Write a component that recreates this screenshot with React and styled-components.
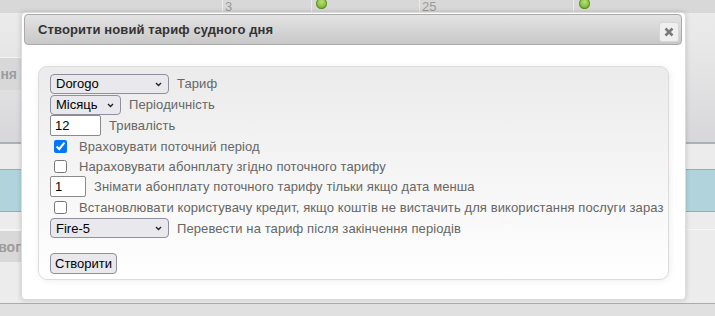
import React from "react";
import styled, { createGlobalStyle } from "styled-components";

const Global = createGlobalStyle`
  html, body { margin: 0; padding: 0; }
  body {
    font-family: "Liberation Sans", Arial, sans-serif;
    background: #e0e0e0;
  }
  * { box-sizing: border-box; }
`;

const Page = styled.div`
  position: relative;
  width: 715px;
  height: 316px;
  overflow: hidden;
  display: flex;
  flex-direction: column;
  background: #e0e0e0;
`;

/* ---------- background page ---------- */
const TopRow = styled.div`
  display: flex;
  height: 13px;
  background: #d8d8d8;
  overflow: hidden;
  flex: none;
`;

const Cell = styled.div`
  width: ${(p) => p.$w}px;
  flex: none;
  height: 13px;
  padding-left: ${(p) => p.$pad || 2}px;
  border-left: ${(p) => (p.$first ? "none" : "1px solid #ececec")};
  font-size: 13px;
  line-height: 13px;
  color: #9a9a9a;
  display: flex;
  align-items: flex-start;
`;

const Dot = styled.span`
  width: 11px;
  height: 11px;
  border-radius: 50%;
  margin-top: -2px;
  background: radial-gradient(circle at 50% 35%, #b8e07a 0%, #86bf3e 55%, #5a8f22 100%);
  box-shadow: inset 0 0 0 1px rgba(70, 110, 20, 0.5);
`;

const Toolbar = styled.div`
  height: 131px;
  flex: none;
  background: linear-gradient(#ebebeb 0%, #e6e6e6 35%, #d7d7db 100%);
  border-bottom: 2px solid #a9b1b9;
  padding-top: 44px;
`;

const SideTab = styled.div`
  width: 21px;
  height: ${(p) => p.$h}px;
  background: #d8d8d8;
  border-top: 1px solid #f2f2f2;
  display: flex;
  justify-content: flex-end;
  align-items: center;
  padding-right: ${(p) => p.$pr || 0}px;
  font-size: 14px;
  font-weight: bold;
  color: #9c9c9c;
  white-space: nowrap;
`;

const Band = styled.div`
  height: ${(p) => p.$h}px;
  flex: none;
  background: ${(p) => p.$bg || "#ececec"};
  border-top: ${(p) => p.$bt || "none"};
  border-bottom: ${(p) => p.$bb || "none"};
`;

const Footer = styled.div`
  flex: 1;
  background: #e0e0e0;
`;

/* ---------- dialog ---------- */
const Dialog = styled.div`
  position: absolute;
  left: 21px;
  top: 12px;
  width: 665px;
  height: 288px;
  background: #fff;
  border: 1px solid #dcdcdc;
  border-radius: 4px;
  box-shadow: 0 0 5px rgba(0, 0, 0, 0.18);
  padding: 1px 3px 0 2px;
  display: flex;
  flex-direction: column;
`;

const TitleBar = styled.div`
  height: 31px;
  flex: none;
  border: 1px solid #aaaaaa;
  border-radius: 4px;
  background: linear-gradient(#e3e3e3, #c8c8c8);
  display: flex;
  align-items: center;
  justify-content: space-between;
  padding: 0 2px 0 13px;
`;

const Title = styled.span`
  font-size: 13px;
  font-weight: bold;
  color: #333;
  letter-spacing: 0.1px;
  margin-top: -1px;
`;

const CloseBtn = styled.button`
  width: 20px;
  height: 20px;
  margin-top: 4px;
  padding: 0;
  border: 1px solid #d6d6d6;
  border-radius: 3px;
  background: #efefef;
  display: flex;
  align-items: center;
  justify-content: center;
  cursor: pointer;
`;

const Panel = styled.div`
  margin: 21px 13px 0 14px;
  height: 214px;
  border: 1px solid #dcdcdc;
  border-radius: 9px;
  background: linear-gradient(#ebebeb, #ffffff);
  box-shadow: 1px 1px 6px rgba(0, 0, 0, 0.07);
  padding: 6px 11px 5px 11px;
  display: flex;
  flex-direction: column;
`;

const Row = styled.div`
  height: ${(p) => p.$h || 21}px;
  display: flex;
  align-items: center;
  gap: ${(p) => p.$gap || 8}px;
`;

const Label = styled.span`
  font-size: 13px;
  color: #666;
  letter-spacing: 0.1px;
  white-space: nowrap;
`;

const SelectWrap = styled.div`
  position: relative;
  width: ${(p) => p.$w}px;
  height: 20px;
  flex: none;
`;

const Select = styled.select`
  appearance: none;
  -webkit-appearance: none;
  width: 100%;
  height: 20px;
  border: 1px solid #8f8f9d;
  border-radius: 4px;
  background: #e9e9ed;
  font-family: "Liberation Sans", Arial, sans-serif;
  font-size: 13px;
  color: #000;
  padding: 0 18px 0 5px;
  margin: 0;
  outline: none;
`;

const Chevron = styled.svg`
  position: absolute;
  right: 7px;
  top: 8px;
  pointer-events: none;
`;

const TextInput = styled.input`
  width: ${(p) => p.$w}px;
  height: 21px;
  flex: none;
  border: 1px solid #8a8a8a;
  border-radius: 2px;
  background: #fff;
  font-family: "Liberation Sans", Arial, sans-serif;
  font-size: 13px;
  color: #000;
  padding: 0 4px;
  margin: 0;
  outline: none;
`;

const Check = styled.input`
  width: 13px;
  height: 13px;
  margin: 0 3px 0 4px;
  flex: none;
  accent-color: #0075ff;
`;

const Button = styled.button`
  align-self: flex-start;
  margin-top: 15px;
  height: 21px;
  padding: 0 4px;
  border: 1px solid #8f8f9d;
  border-radius: 4px;
  background: #e9e9ed;
  font-family: "Liberation Sans", Arial, sans-serif;
  font-size: 13px;
  color: #000;
  cursor: pointer;
`;

const ChevronIcon = () => (
  <Chevron width="7" height="5" viewBox="0 0 7 5">
    <path d="M1 1 L3.5 3.5 L6 1" fill="none" stroke="#222" strokeWidth="1.4" />
  </Chevron>
);

const SelectBox = ({ w, value, options }) => (
  <SelectWrap $w={w}>
    <Select defaultValue={value}>
      {options.map((o) => (
        <option key={o}>{o}</option>
      ))}
    </Select>
    <ChevronIcon />
  </SelectWrap>
);

export default function App() {
  return (
    <>
      <Global />
      <Page>
        <TopRow>
          <Cell $first $w={222} />
          <Cell $w={89}>3</Cell>
          <Cell $w={108} $pad={4}>
            <Dot />
          </Cell>
          <Cell $w={154}>25</Cell>
          <Cell $w={142} $pad={5}>
            <Dot />
          </Cell>
        </TopRow>
        <Toolbar>
          <SideTab $h={33} $pr={4}>ня</SideTab>
        </Toolbar>
        <Band $h={25} />
        <Band $h={43} $bg="#b1d4dc" $bt="1px solid #7fb6c6" $bb="1px solid #7fb6c6" />
        <Band $h={18} $bb="1px solid #f6f6f6" />
        <Band $h={32} $bg="#ececec">
          <SideTab $h={32}>вог</SideTab>
        </Band>
        <Band $h={42} $bb="1px solid #a9a9b1" />
        <Footer />

        <Dialog role="dialog">
          <TitleBar>
            <Title>Створити новий тариф судного дня</Title>
            <CloseBtn aria-label="close">
              <svg width="10" height="10" viewBox="0 0 10 10">
                <path d="M1.5 1.5 L8.5 8.5 M8.5 1.5 L1.5 8.5" stroke="#7a7a7a" strokeWidth="2.6" />
              </svg>
            </CloseBtn>
          </TitleBar>
          <Panel>
            <Row>
              <SelectBox w={119} value="Dorogo" options={["Dorogo", "Fire-5"]} />
              <Label>Тариф</Label>
            </Row>
            <Row>
              <SelectBox w={71} value="Місяць" options={["Місяць", "День"]} />
              <Label>Періодичність</Label>
            </Row>
            <Row>
              <TextInput $w={51} defaultValue="12" />
              <Label>Тривалість</Label>
            </Row>
            <Row $gap={9}>
              <Check type="checkbox" defaultChecked />
              <Label>Враховувати поточний період</Label>
            </Row>
            <Row $h={19} $gap={9}>
              <Check type="checkbox" />
              <Label>Нараховувати абонплату згідно поточного тарифу</Label>
            </Row>
            <Row>
              <TextInput $w={36} defaultValue="1" />
              <Label>Знімати абонплату поточного тарифу тільки якщо дата менша</Label>
            </Row>
            <Row $gap={9}>
              <Check type="checkbox" />
              <Label>
                Встановлювати користувачу кредит, якщо коштів не вистачить для використання послуги зараз
              </Label>
            </Row>
            <Row $h={20}>
              <SelectBox w={119} value="Fire-5" options={["Dorogo", "Fire-5"]} />
              <Label>Перевести на тариф після закінчення періодів</Label>
            </Row>
            <Button>Створити</Button>
          </Panel>
        </Dialog>
      </Page>
    </>
  );
}
